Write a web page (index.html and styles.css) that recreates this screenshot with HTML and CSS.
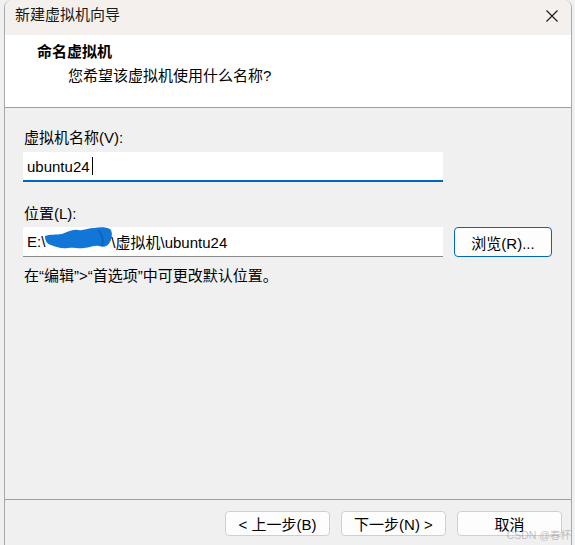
FILE: index.html
```html
<!DOCTYPE html>
<html lang="zh-CN">
<head>
<meta charset="utf-8">
<title>新建虚拟机向导</title>
<link rel="stylesheet" href="styles.css">
</head>
<body>
<div class="window">
  <div class="titlebar">
    <span class="title">新建虚拟机向导</span>
    <svg class="close" width="12" height="12" viewBox="0 0 12 12"><path d="M0.5 0.5L11.5 11.5M11.5 0.5L0.5 11.5" stroke="#1a1a1a" stroke-width="1.1" fill="none"/></svg>
  </div>
  <div class="header">
    <div class="h-title">命名虚拟机</div>
    <div class="h-sub">您希望该虚拟机使用什么名称?</div>
  </div>
  <div class="content">
    <div class="label">虚拟机名称(V):</div>
    <div class="input active">ubuntu24<span class="caret"></span></div>
    <div class="label second">位置(L):</div>
    <div class="row">
      <div class="input path">E:\<svg class="blot" width="69" height="24" viewBox="0 0 69 24"><path d="M1 10C6 8 12 9 18 8C24 6 28 3 34 4C40 5 44 2 50 2C56 1 62 1 66 3C69 6 68 12 66 16C64 20 60 22 55 20C50 19 46 22 40 22C34 23 30 21 24 22C18 23 12 21 7 19C3 18 1 15 1 10Z" fill="#1176d5"/><path d="M54 4C58 8 60 14 58 20" stroke="#0a66c2" stroke-width="2" fill="none"/></svg>\虚拟机\ubuntu24</div>
      <div class="btn browse">浏览(R)...</div>
    </div>
    <div class="note">在“编辑”&gt;“首选项”中可更改默认位置。</div>
  </div>
  <div class="footer">
    <div class="btn">&lt; 上一步(B)</div>
    <div class="btn">下一步(N) &gt;</div>
    <div class="btn">取消</div>
    <span class="watermark">CSDN @春杯</span>
  </div>
</div>
</body>
</html>
```
FILE: styles.css
```css
html, body {
  margin: 0;
  padding: 0;
  background: #f0f0f0;
  overflow: hidden;
}
body {
  font-family: "Liberation Sans", "Noto Sans CJK SC", sans-serif;
  color: #000;
  width: 575px;
  height: 545px;
}
.window {
  margin-left: 4px;
  width: 566px;
  height: 545px;
  border-left: 1px solid #a8a8a8;
  border-right: 1px solid #a8a8a8;
  border-top-left-radius: 8px;
  border-top-right-radius: 8px;
  display: flex;
  flex-direction: column;
  background: #f0f0f0;
  overflow: hidden;
  position: relative;
}
.titlebar {
  height: 35px;
  flex: none;
  background: #f3f0ed;
  display: flex;
  align-items: center;
  justify-content: space-between;
  padding: 0 13px 0 10px;
}
.title {
  font-size: 15px;
  line-height: 20px;
  color: #1a1a1a;
  margin-top: -5px;
}
.close {
  margin-top: -3px;
}
.header {
  height: 73px;
  flex: none;
  background: #fff;
  border-bottom: 1px solid #a0a0a0;
  box-sizing: border-box;
  padding: 7px 0 0 32px;
}
.h-title {
  font-size: 15px;
  font-weight: bold;
  line-height: 20px;
}
.h-sub {
  font-size: 15px;
  line-height: 20px;
  margin-top: 4px;
  padding-left: 31px;
}
.content {
  flex: 1;
  padding: 20px 0 0 18px;
}
.label {
  font-size: 15px;
  line-height: 20px;
  padding-left: 1px;
}
.label.second {
  margin-top: 22px;
}
.input {
  width: 420px;
  height: 30px;
  box-sizing: border-box;
  background: #fff;
  border-bottom: 1px solid #8a8a8a;
  font-size: 15px;
  padding-left: 4px;
  margin-top: 4px;
  display: flex;
  align-items: center;
  white-space: nowrap;
}
.input.active {
  border-bottom: 2px solid #0067c0;
}
.caret {
  display: inline-block;
  width: 1px;
  height: 18px;
  background: #000;
  margin-left: 2px;
}
.row {
  display: flex;
  align-items: flex-start;
  gap: 11px;
  margin-top: 3px;
}
.row .input {
  margin-top: 0;
  overflow: visible;
}
.blot {
  flex: none;
  align-self: flex-start;
  margin: -1px -2px 0 -1px;
}
.btn {
  width: 105px;
  height: 25px;
  box-sizing: border-box;
  border: 1px solid #d0d0d0;
  border-radius: 4px;
  background: #fdfdfd;
  font-size: 15px;
  display: flex;
  align-items: center;
  justify-content: center;
}
.btn.browse {
  width: 98px;
  height: 30px;
  border-color: #0067c0;
}
.note {
  font-size: 15px;
  line-height: 20px;
  margin-top: 9px;
  padding-left: 1px;
}
.footer {
  height: 46px;
  flex: none;
  border-top: 1px solid #a0a0a0;
  display: flex;
  justify-content: flex-end;
  gap: 11px;
  padding: 11px 9px 0 0;
  box-sizing: border-box;
  position: relative;
}
.watermark {
  position: absolute;
  right: 0;
  bottom: 4px;
  font-size: 10.5px;
  line-height: 12px;
  color: rgba(140, 140, 140, 0.5);
}
```
